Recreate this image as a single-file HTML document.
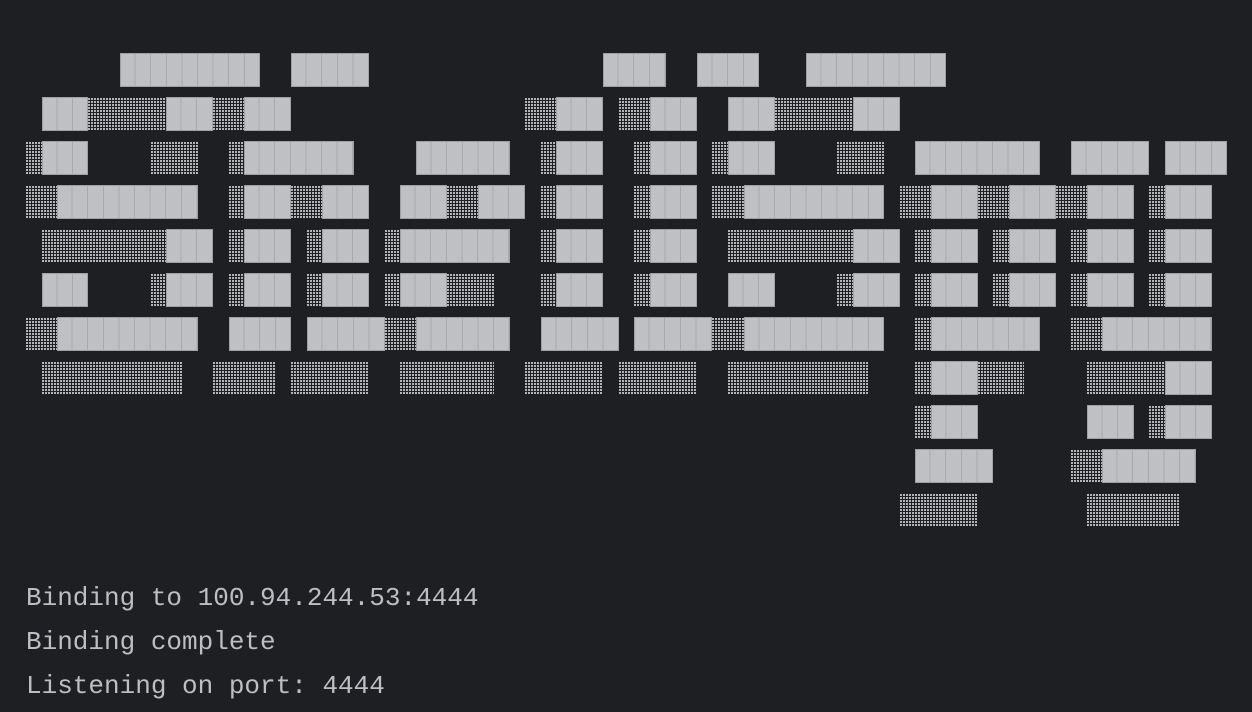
<!DOCTYPE html>
<html><head><meta charset="utf-8"><style>
html,body{margin:0;padding:0;background:#1e1f22;width:1252px;height:712px;overflow:hidden;position:relative}
.b{position:absolute;left:calc(26px + var(--c)*15.6px);top:calc(53px + var(--r)*44px);width:calc(var(--n)*15.6px);height:34px}
.f{background:repeating-linear-gradient(90deg,#bfc0c4 0 14.6px,#a9aaae 14.6px 15.6px);box-shadow:inset 0 0 0 1px #9fa0a4}
.d{background-color:#b4b5b9;background-image:linear-gradient(90deg,transparent 2px,#1e1f22 2px),linear-gradient(0deg,transparent 2px,#1e1f22 2px);background-size:3px 3px}
.t{position:absolute;left:26px;font-family:"Liberation Mono",monospace;font-size:26px;color:#bcbec4;white-space:pre;line-height:44px}
</style></head><body>
<!-- row 0 -->
<div class="b f" style="--r:0;--c:6;--n:9"></div>
<div class="b f" style="--r:0;--c:17;--n:5"></div>
<div class="b f" style="--r:0;--c:37;--n:4"></div>
<div class="b f" style="--r:0;--c:43;--n:4"></div>
<div class="b f" style="--r:0;--c:50;--n:9"></div>
<!-- row 1 -->
<div class="b f" style="--r:1;--c:1;--n:3"></div>
<div class="b d" style="--r:1;--c:4;--n:5"></div>
<div class="b f" style="--r:1;--c:9;--n:3"></div>
<div class="b d" style="--r:1;--c:12;--n:2"></div>
<div class="b f" style="--r:1;--c:14;--n:3"></div>
<div class="b d" style="--r:1;--c:32;--n:2"></div>
<div class="b f" style="--r:1;--c:34;--n:3"></div>
<div class="b d" style="--r:1;--c:38;--n:2"></div>
<div class="b f" style="--r:1;--c:40;--n:3"></div>
<div class="b f" style="--r:1;--c:45;--n:3"></div>
<div class="b d" style="--r:1;--c:48;--n:5"></div>
<div class="b f" style="--r:1;--c:53;--n:3"></div>
<!-- row 2 -->
<div class="b d" style="--r:2;--c:0;--n:1"></div>
<div class="b f" style="--r:2;--c:1;--n:3"></div>
<div class="b d" style="--r:2;--c:8;--n:3"></div>
<div class="b d" style="--r:2;--c:13;--n:1"></div>
<div class="b f" style="--r:2;--c:14;--n:7"></div>
<div class="b f" style="--r:2;--c:25;--n:6"></div>
<div class="b d" style="--r:2;--c:33;--n:1"></div>
<div class="b f" style="--r:2;--c:34;--n:3"></div>
<div class="b d" style="--r:2;--c:39;--n:1"></div>
<div class="b f" style="--r:2;--c:40;--n:3"></div>
<div class="b d" style="--r:2;--c:44;--n:1"></div>
<div class="b f" style="--r:2;--c:45;--n:3"></div>
<div class="b d" style="--r:2;--c:52;--n:3"></div>
<div class="b f" style="--r:2;--c:57;--n:8"></div>
<div class="b f" style="--r:2;--c:67;--n:5"></div>
<div class="b f" style="--r:2;--c:73;--n:4"></div>
<!-- row 3 -->
<div class="b d" style="--r:3;--c:0;--n:2"></div>
<div class="b f" style="--r:3;--c:2;--n:9"></div>
<div class="b d" style="--r:3;--c:13;--n:1"></div>
<div class="b f" style="--r:3;--c:14;--n:3"></div>
<div class="b d" style="--r:3;--c:17;--n:2"></div>
<div class="b f" style="--r:3;--c:19;--n:3"></div>
<div class="b f" style="--r:3;--c:24;--n:3"></div>
<div class="b d" style="--r:3;--c:27;--n:2"></div>
<div class="b f" style="--r:3;--c:29;--n:3"></div>
<div class="b d" style="--r:3;--c:33;--n:1"></div>
<div class="b f" style="--r:3;--c:34;--n:3"></div>
<div class="b d" style="--r:3;--c:39;--n:1"></div>
<div class="b f" style="--r:3;--c:40;--n:3"></div>
<div class="b d" style="--r:3;--c:44;--n:2"></div>
<div class="b f" style="--r:3;--c:46;--n:9"></div>
<div class="b d" style="--r:3;--c:56;--n:2"></div>
<div class="b f" style="--r:3;--c:58;--n:3"></div>
<div class="b d" style="--r:3;--c:61;--n:2"></div>
<div class="b f" style="--r:3;--c:63;--n:3"></div>
<div class="b d" style="--r:3;--c:66;--n:2"></div>
<div class="b f" style="--r:3;--c:68;--n:3"></div>
<div class="b d" style="--r:3;--c:72;--n:1"></div>
<div class="b f" style="--r:3;--c:73;--n:3"></div>
<!-- row 4 -->
<div class="b d" style="--r:4;--c:1;--n:8"></div>
<div class="b f" style="--r:4;--c:9;--n:3"></div>
<div class="b d" style="--r:4;--c:13;--n:1"></div>
<div class="b f" style="--r:4;--c:14;--n:3"></div>
<div class="b d" style="--r:4;--c:18;--n:1"></div>
<div class="b f" style="--r:4;--c:19;--n:3"></div>
<div class="b d" style="--r:4;--c:23;--n:1"></div>
<div class="b f" style="--r:4;--c:24;--n:7"></div>
<div class="b d" style="--r:4;--c:33;--n:1"></div>
<div class="b f" style="--r:4;--c:34;--n:3"></div>
<div class="b d" style="--r:4;--c:39;--n:1"></div>
<div class="b f" style="--r:4;--c:40;--n:3"></div>
<div class="b d" style="--r:4;--c:45;--n:8"></div>
<div class="b f" style="--r:4;--c:53;--n:3"></div>
<div class="b d" style="--r:4;--c:57;--n:1"></div>
<div class="b f" style="--r:4;--c:58;--n:3"></div>
<div class="b d" style="--r:4;--c:62;--n:1"></div>
<div class="b f" style="--r:4;--c:63;--n:3"></div>
<div class="b d" style="--r:4;--c:67;--n:1"></div>
<div class="b f" style="--r:4;--c:68;--n:3"></div>
<div class="b d" style="--r:4;--c:72;--n:1"></div>
<div class="b f" style="--r:4;--c:73;--n:3"></div>
<!-- row 5 -->
<div class="b f" style="--r:5;--c:1;--n:3"></div>
<div class="b d" style="--r:5;--c:8;--n:1"></div>
<div class="b f" style="--r:5;--c:9;--n:3"></div>
<div class="b d" style="--r:5;--c:13;--n:1"></div>
<div class="b f" style="--r:5;--c:14;--n:3"></div>
<div class="b d" style="--r:5;--c:18;--n:1"></div>
<div class="b f" style="--r:5;--c:19;--n:3"></div>
<div class="b d" style="--r:5;--c:23;--n:1"></div>
<div class="b f" style="--r:5;--c:24;--n:3"></div>
<div class="b d" style="--r:5;--c:27;--n:3"></div>
<div class="b d" style="--r:5;--c:33;--n:1"></div>
<div class="b f" style="--r:5;--c:34;--n:3"></div>
<div class="b d" style="--r:5;--c:39;--n:1"></div>
<div class="b f" style="--r:5;--c:40;--n:3"></div>
<div class="b f" style="--r:5;--c:45;--n:3"></div>
<div class="b d" style="--r:5;--c:52;--n:1"></div>
<div class="b f" style="--r:5;--c:53;--n:3"></div>
<div class="b d" style="--r:5;--c:57;--n:1"></div>
<div class="b f" style="--r:5;--c:58;--n:3"></div>
<div class="b d" style="--r:5;--c:62;--n:1"></div>
<div class="b f" style="--r:5;--c:63;--n:3"></div>
<div class="b d" style="--r:5;--c:67;--n:1"></div>
<div class="b f" style="--r:5;--c:68;--n:3"></div>
<div class="b d" style="--r:5;--c:72;--n:1"></div>
<div class="b f" style="--r:5;--c:73;--n:3"></div>
<!-- row 6 -->
<div class="b d" style="--r:6;--c:0;--n:2"></div>
<div class="b f" style="--r:6;--c:2;--n:9"></div>
<div class="b f" style="--r:6;--c:13;--n:4"></div>
<div class="b f" style="--r:6;--c:18;--n:5"></div>
<div class="b d" style="--r:6;--c:23;--n:2"></div>
<div class="b f" style="--r:6;--c:25;--n:6"></div>
<div class="b f" style="--r:6;--c:33;--n:5"></div>
<div class="b f" style="--r:6;--c:39;--n:5"></div>
<div class="b d" style="--r:6;--c:44;--n:2"></div>
<div class="b f" style="--r:6;--c:46;--n:9"></div>
<div class="b d" style="--r:6;--c:57;--n:1"></div>
<div class="b f" style="--r:6;--c:58;--n:7"></div>
<div class="b d" style="--r:6;--c:67;--n:2"></div>
<div class="b f" style="--r:6;--c:69;--n:7"></div>
<!-- row 7 -->
<div class="b d" style="--r:7;--c:1;--n:9"></div>
<div class="b d" style="--r:7;--c:12;--n:4"></div>
<div class="b d" style="--r:7;--c:17;--n:5"></div>
<div class="b d" style="--r:7;--c:24;--n:6"></div>
<div class="b d" style="--r:7;--c:32;--n:5"></div>
<div class="b d" style="--r:7;--c:38;--n:5"></div>
<div class="b d" style="--r:7;--c:45;--n:9"></div>
<div class="b d" style="--r:7;--c:57;--n:1"></div>
<div class="b f" style="--r:7;--c:58;--n:3"></div>
<div class="b d" style="--r:7;--c:61;--n:3"></div>
<div class="b d" style="--r:7;--c:68;--n:5"></div>
<div class="b f" style="--r:7;--c:73;--n:3"></div>
<!-- row 8 -->
<div class="b d" style="--r:8;--c:57;--n:1"></div>
<div class="b f" style="--r:8;--c:58;--n:3"></div>
<div class="b f" style="--r:8;--c:68;--n:3"></div>
<div class="b d" style="--r:8;--c:72;--n:1"></div>
<div class="b f" style="--r:8;--c:73;--n:3"></div>
<!-- row 9 -->
<div class="b f" style="--r:9;--c:57;--n:5"></div>
<div class="b d" style="--r:9;--c:67;--n:2"></div>
<div class="b f" style="--r:9;--c:69;--n:6"></div>
<!-- row 10 -->
<div class="b d" style="--r:10;--c:56;--n:5"></div>
<div class="b d" style="--r:10;--c:68;--n:6"></div>

<div class="t" style="top:576px">Binding to 100.94.244.53:4444</div>
<div class="t" style="top:620px">Binding complete</div>
<div class="t" style="top:664px">Listening on port: 4444</div>
</body></html>
